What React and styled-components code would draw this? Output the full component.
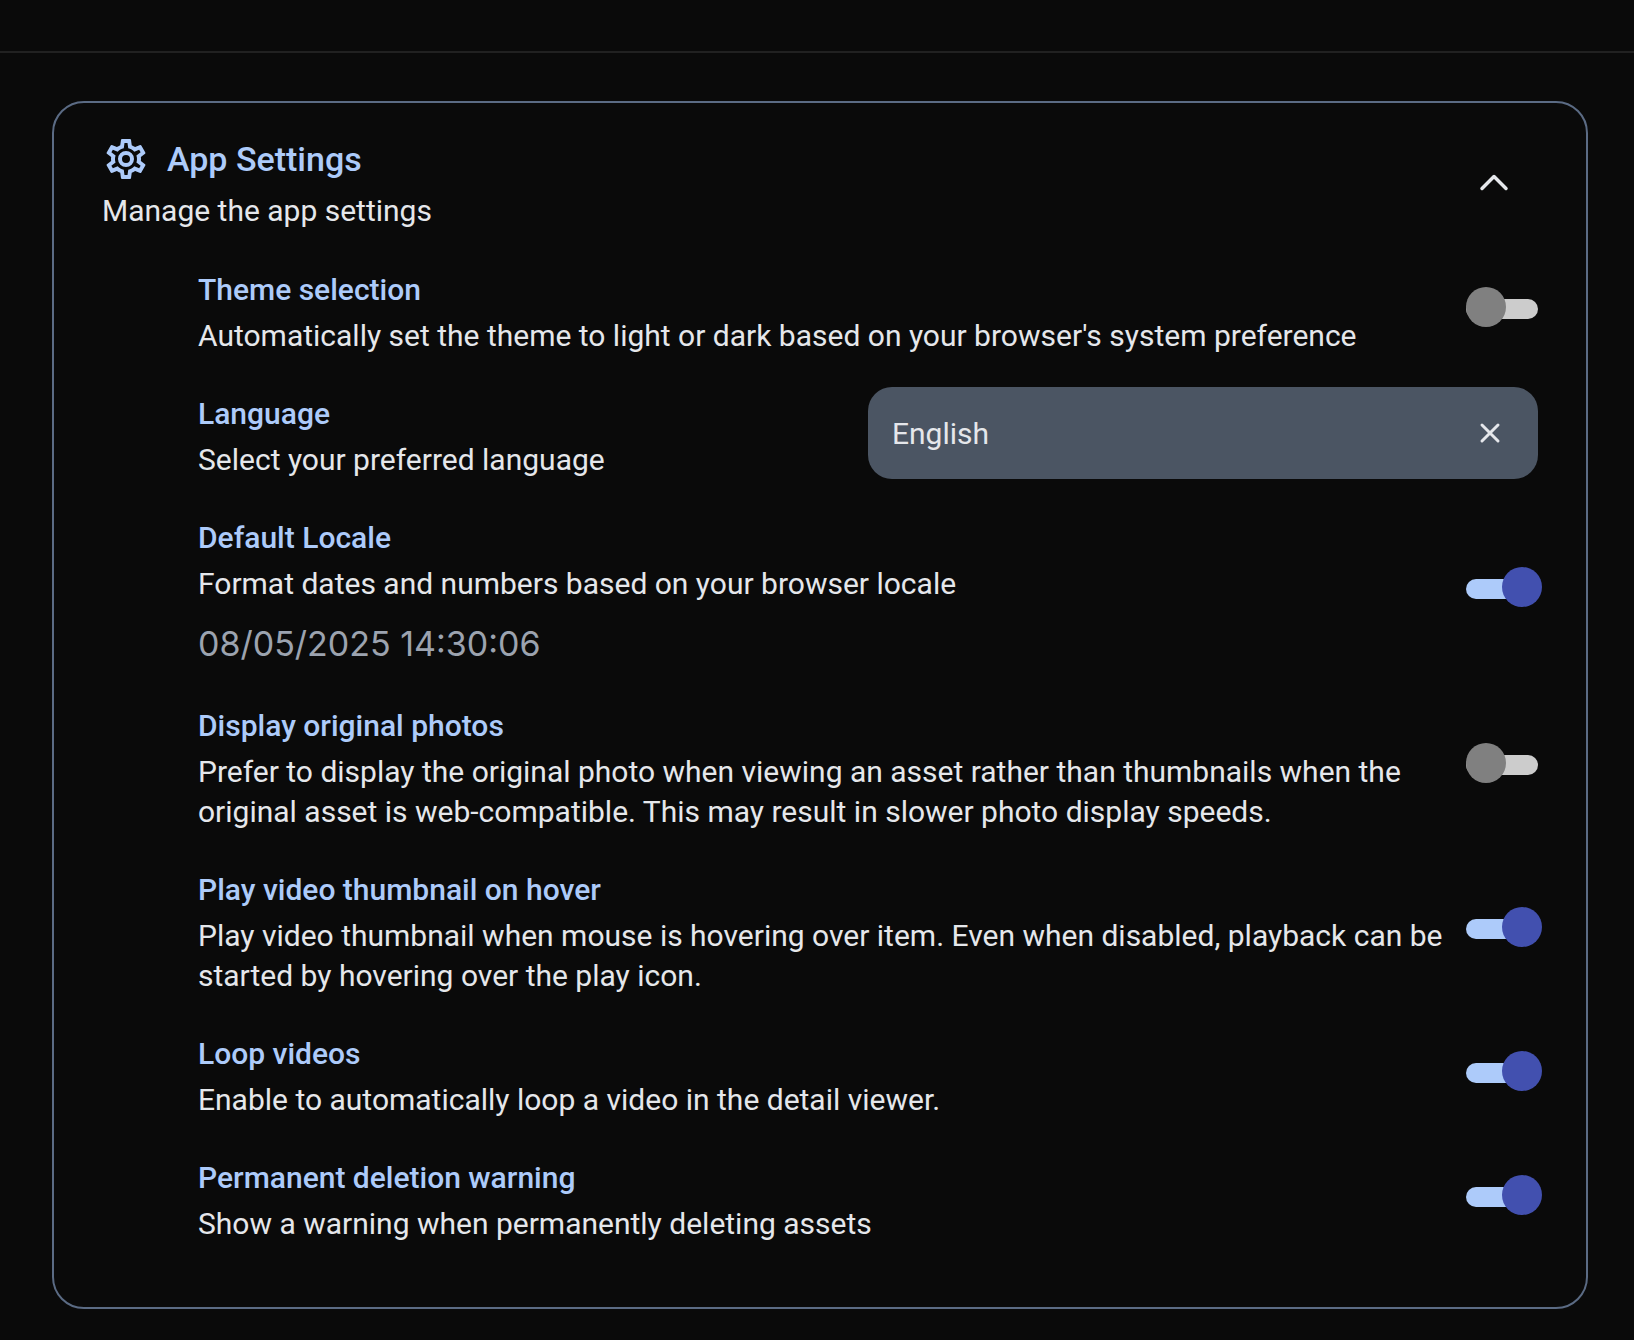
import React, { useState } from "react";
import styled, { createGlobalStyle } from "styled-components";

const GlobalStyle = createGlobalStyle`
  *, *::before, *::after { box-sizing: border-box; }
  body {
    margin: 0;
    background: #0a0a0a;
    color: #e5e7eb;
    font-family: Roboto, "Liberation Sans", sans-serif;
  }
  h2, h3, p { margin: 0; }
`;

const TopBar = styled.header`
  height: 53px;
  border-bottom: 2px solid #212121;
`;

const Page = styled.main`
  padding: 48px 46px 31px 52px;
`;

const Card = styled.section`
  padding: 32px 48px 49px;
  border: 2px solid #5b6b84;
  border-radius: 32px;
`;

const CardHeader = styled.div`
  display: flex;
  align-items: center;
  justify-content: space-between;
  height: 96px;
`;

const Heading = styled.div`
  display: flex;
  align-items: center;
  gap: 17px;
  height: 48px;
  color: #adcbfa;
`;

const CardTitle = styled.h2`
  font-size: 34px;
  line-height: 48px;
  font-weight: 500;
`;

const Subtitle = styled.p`
  padding-top: 8px;
  font-size: 30px;
  line-height: 40px;
`;

const CollapseButton = styled.button`
  display: grid;
  place-items: center;
  width: 88px;
  height: 88px;
  padding: 0;
  border: 0;
  border-radius: 50%;
  background: none;
  color: inherit;
`;

const SettingList = styled.div`
  padding: 15px 0 0 96px;
`;

const Row = styled.div`
  display: flex;
  align-items: center;
  justify-content: space-between;
  gap: 16px;
`;

const RowText = styled.div`
  flex: 1;
  min-width: 0;
  padding: 24px 0 14px;
`;

const Label = styled.label`
  display: block;
  width: fit-content;
  margin-bottom: 6px;
  font-size: 30px;
  line-height: 40px;
  font-weight: 500;
  color: #adcbfa;
`;

const Description = styled.p`
  font-size: 30px;
  line-height: 40px;
`;

const DateSample = styled.p`
  padding-top: 16px;
  font-family: Inter, Roboto, sans-serif;
  font-size: 34px;
  line-height: 48px;
  color: #9ca3af;
`;

const Switch = styled.input`
  appearance: none;
  position: relative;
  flex: none;
  width: 72px;
  height: 42px;
  margin: 0;
  cursor: pointer;

  &::before {
    content: "";
    position: absolute;
    inset: 12px 0 10px;
    border-radius: 10px;
    background: #ccc;
  }
  &::after {
    content: "";
    position: absolute;
    top: 0;
    left: 0;
    width: 40px;
    height: 40px;
    border-radius: 50%;
    background: #808080;
  }
  &:checked::before { background: #adcbfa; }
  &:checked::after { left: 36px; background: #4250af; }
`;

const Combobox = styled.div`
  display: flex;
  align-items: center;
  width: 50%;
  height: 92px;
  margin-top: 2px;
  padding: 0 24px;
  border-radius: 24px;
  background: #4b5563;
`;

const ComboInput = styled.input`
  flex: 1;
  min-width: 0;
  padding: 2px 0 0;
  border: 0;
  outline: 0;
  background: none;
  color: inherit;
  font: inherit;
  font-size: 30px;
  line-height: 40px;
`;

const ClearButton = styled.button`
  display: grid;
  place-items: center;
  width: 48px;
  height: 48px;
  padding: 0;
  border: 0;
  background: none;
  color: inherit;
`;

const CogIcon = () => (
  <svg width="48" height="48" viewBox="0 0 24 24" fill="currentColor" aria-hidden="true">
    <path d="M12,8A4,4 0 0,1 16,12A4,4 0 0,1 12,16A4,4 0 0,1 8,12A4,4 0 0,1 12,8M12,10A2,2 0 0,0 10,12A2,2 0 0,0 12,14A2,2 0 0,0 14,12A2,2 0 0,0 12,10M10,22C9.75,22 9.54,21.82 9.5,21.58L9.13,18.93C8.5,18.68 7.96,18.34 7.44,17.94L4.95,18.95C4.73,19.03 4.46,18.95 4.34,18.73L2.34,15.27C2.21,15.05 2.27,14.78 2.46,14.63L4.57,12.97L4.5,12L4.57,11L2.46,9.37C2.27,9.22 2.21,8.95 2.34,8.73L4.34,5.27C4.46,5.05 4.73,4.96 4.95,5.05L7.44,6.05C7.96,5.66 8.5,5.32 9.13,5.07L9.5,2.42C9.54,2.18 9.75,2 10,2H14C14.25,2 14.46,2.18 14.5,2.42L14.87,5.07C15.5,5.32 16.04,5.66 16.56,6.05L19.05,5.05C19.27,4.96 19.54,5.05 19.66,5.27L21.66,8.73C21.79,8.95 21.73,9.22 21.54,9.37L19.43,11L19.5,12L19.43,13L21.54,14.63C21.73,14.78 21.79,15.05 21.66,15.27L19.66,18.73C19.54,18.95 19.27,19.04 19.05,18.95L16.56,17.95C16.04,18.34 15.5,18.68 14.87,18.93L14.5,21.58C14.46,21.82 14.25,22 14,22H10M11.25,4L10.88,6.61C9.68,6.86 8.62,7.5 7.85,8.39L5.44,7.35L4.69,8.65L6.8,10.2C6.4,11.37 6.4,12.64 6.8,13.8L4.68,15.36L5.43,16.66L7.86,15.62C8.63,16.5 9.68,17.14 10.87,17.38L11.24,20H12.76L13.13,17.39C14.32,17.14 15.37,16.5 16.14,15.62L18.57,16.66L19.32,15.36L17.2,13.81C17.6,12.64 17.6,11.37 17.2,10.2L19.31,8.65L18.56,7.35L16.15,8.39C15.38,7.5 14.32,6.86 13.12,6.62L12.75,4H11.25Z" />
  </svg>
);

const StrokeIcon = ({ size, d, width }) => (
  <svg
    width={size}
    height={size}
    viewBox="0 0 48 48"
    fill="none"
    stroke="currentColor"
    strokeWidth={width}
    strokeLinecap="round"
    strokeLinejoin="round"
    aria-hidden="true"
  >
    <path d={d} />
  </svg>
);

const settings = [
  {
    id: "theme",
    title: "Theme selection",
    text: "Automatically set the theme to light or dark based on your browser's system preference",
    on: false,
  },
  { id: "language", title: "Language", text: "Select your preferred language", combo: "English" },
  {
    id: "locale",
    title: "Default Locale",
    text: "Format dates and numbers based on your browser locale",
    sample: "08/05/2025 14:30:06",
    on: true,
  },
  {
    id: "original",
    title: "Display original photos",
    text: "Prefer to display the original photo when viewing an asset rather than thumbnails when the original asset is web-compatible. This may result in slower photo display speeds.",
    on: false,
  },
  {
    id: "hover",
    title: "Play video thumbnail on hover",
    text: "Play video thumbnail when mouse is hovering over item. Even when disabled, playback can be started by hovering over the play icon.",
    on: true,
  },
  {
    id: "loop",
    title: "Loop videos",
    text: "Enable to automatically loop a video in the detail viewer.",
    on: true,
  },
  {
    id: "deletion",
    title: "Permanent deletion warning",
    text: "Show a warning when permanently deleting assets",
    on: true,
  },
];

function LanguageField({ id, initial }) {
  const [value, setValue] = useState(initial);
  return (
    <Combobox>
      <ComboInput id={id} role="combobox" aria-expanded="false" value={value} onChange={(e) => setValue(e.target.value)} />
      <ClearButton type="button" aria-label="Clear value" onClick={() => setValue("")}>
        <StrokeIcon size={48} width={3} d="M16 16 32 32M32 16 16 32" />
      </ClearButton>
    </Combobox>
  );
}

function SettingRow({ id, title, text, sample, combo, on }) {
  return (
    <Row>
      <RowText>
        <Label htmlFor={id}>{title}</Label>
        <Description>{text}</Description>
        {sample && <DateSample>{sample}</DateSample>}
      </RowText>
      {combo ? <LanguageField id={id} initial={combo} /> : <Switch id={id} type="checkbox" role="switch" defaultChecked={on} />}
    </Row>
  );
}

export default function App() {
  const [open, setOpen] = useState(true);
  return (
    <>
      <GlobalStyle />
      <TopBar />
      <Page>
        <Card>
          <CardHeader>
            <div>
              <Heading>
                <CogIcon />
                <CardTitle>App Settings</CardTitle>
              </Heading>
              <Subtitle>Manage the app settings</Subtitle>
            </div>
            <CollapseButton type="button" aria-label="Toggle app settings" aria-expanded={open} onClick={() => setOpen(!open)}>
              <StrokeIcon size={48} width={3.5} d="M12 29.5 24 17.5 36 29.5" />
            </CollapseButton>
          </CardHeader>
          {open && (
            <SettingList>
              {settings.map((s) => (
                <SettingRow key={s.id} {...s} />
              ))}
            </SettingList>
          )}
        </Card>
      </Page>
    </>
  );
}
